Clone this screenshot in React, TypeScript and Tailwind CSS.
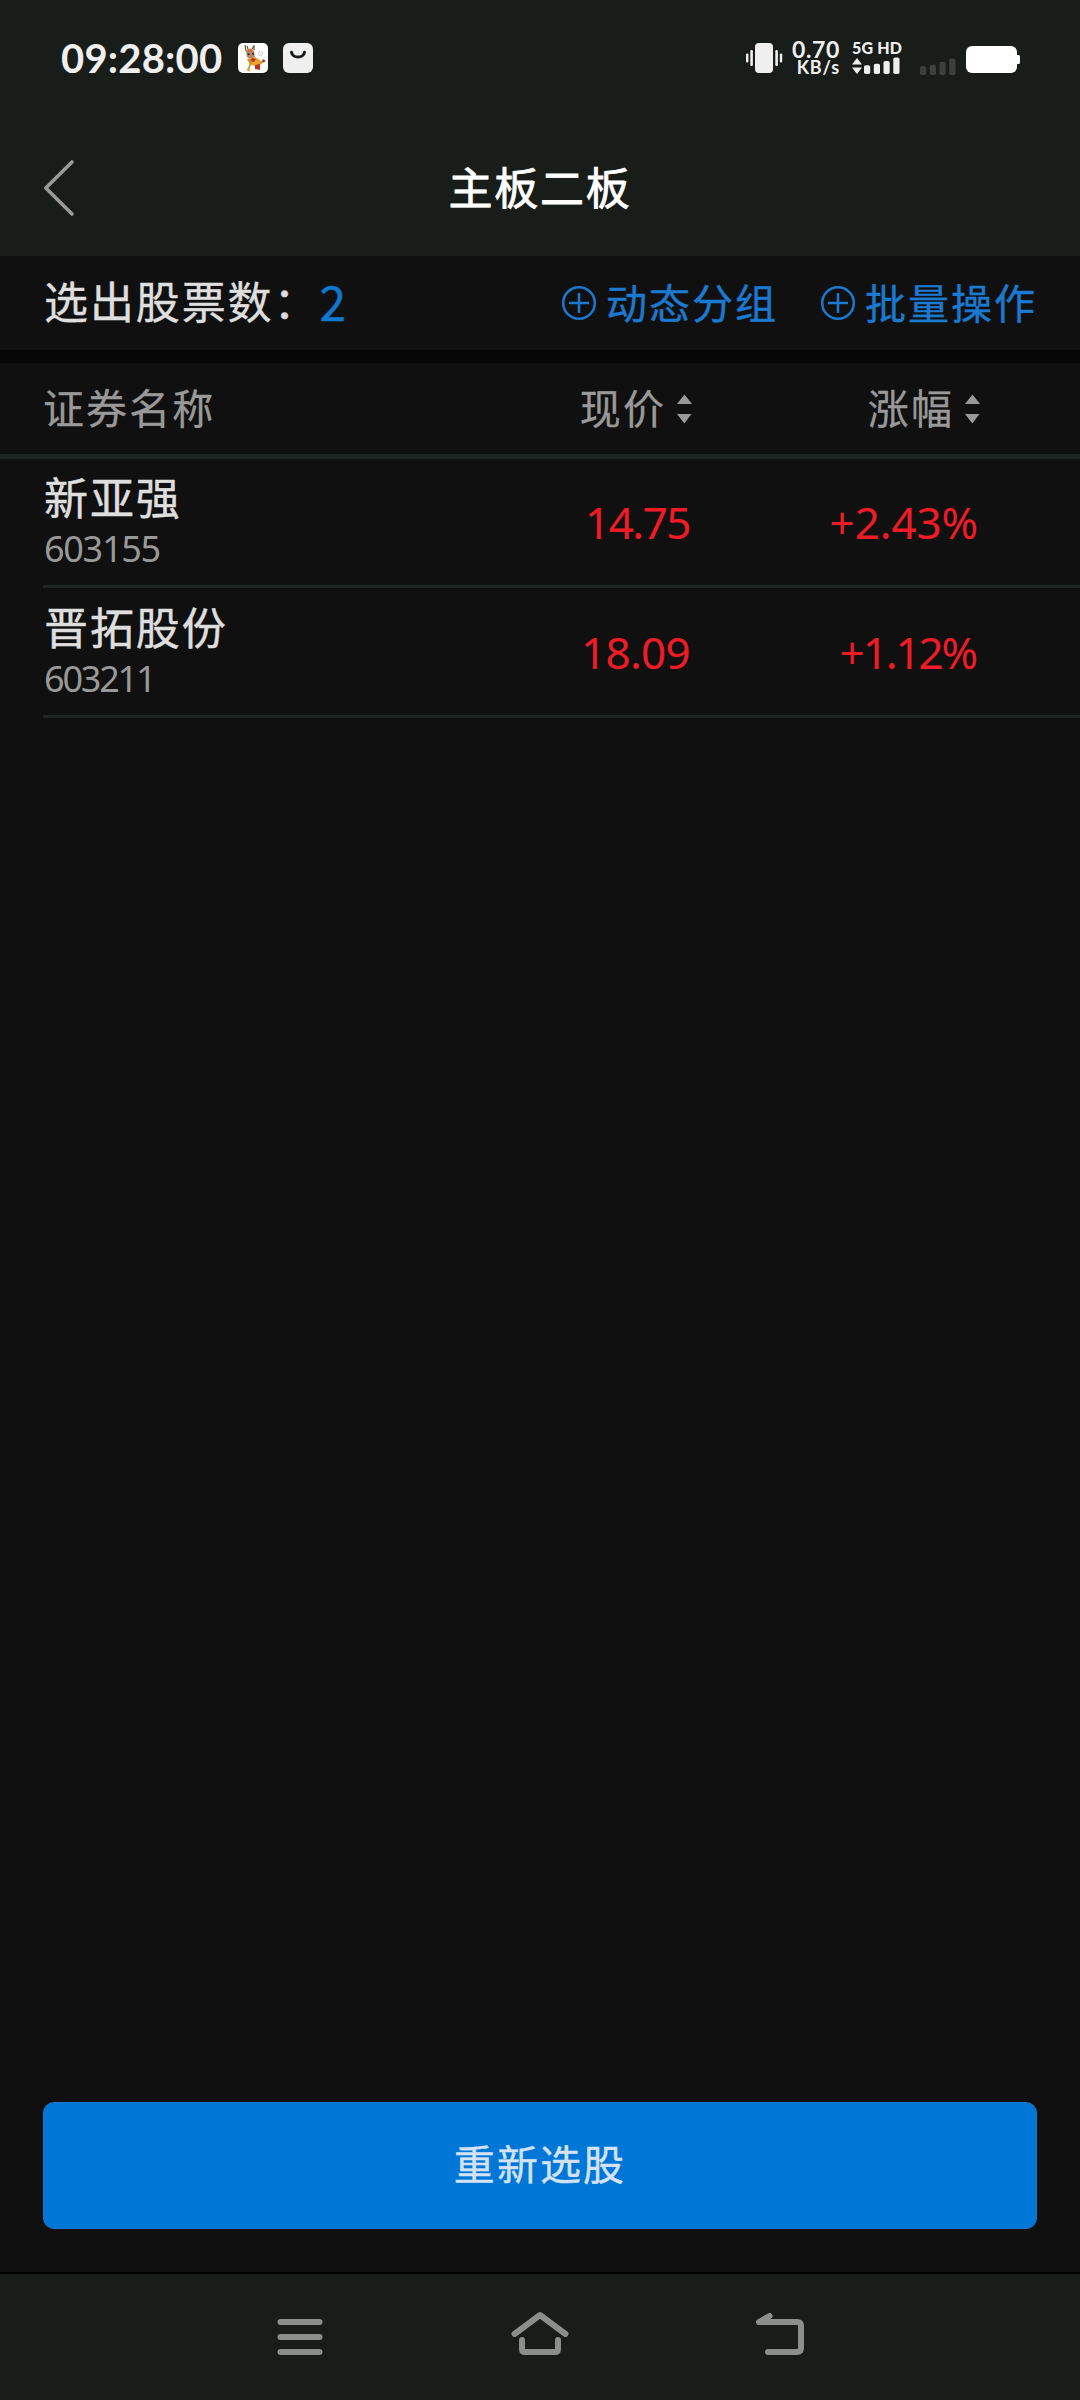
import React from 'react';

const stocks = [
  { name: '新亚强', code: '603155', price: '14.75', change: '+2.43%', codeCls: 'tracking-[-1.3px]', priceCls: 'tracking-[-1.5px] pr-[2px]', changeCls: 'tracking-[-0.1px] pr-[2px]' },
  { name: '晋拓股份', code: '603211', price: '18.09', change: '+1.12%', codeCls: 'tracking-[-2.2px]', priceCls: 'tracking-[-0.7px] pr-[2px]', changeCls: 'tracking-[-2.1px] pr-[4px]' },
];

const SignalBars = ({ className }: { className: string }) => (
  <svg width="36" height="17" viewBox="0 0 36 17" className={className} fill="currentColor">
    <rect x="0" y="8.3" width="6.2" height="8.7" rx="1.8" />
    <rect x="9.8" y="6.7" width="6.2" height="10.3" rx="1.8" />
    <rect x="19.5" y="4" width="6.2" height="13" rx="1.8" />
    <rect x="29.3" y="0.5" width="6.2" height="16.5" rx="1.8" />
  </svg>
);

const PlusCircle = () => (
  <svg width="36" height="36" viewBox="0 0 36 36" fill="none" stroke="currentColor" strokeWidth="2.5" className="shrink-0">
    <circle cx="18" cy="18" r="15.8" />
    <path d="M18 8v20M8 18h20" />
  </svg>
);

const SortIcon = () => (
  <svg width="15" height="30" viewBox="0 0 15 30" fill="#999" className="shrink-0">
    <path d="M7.5 0.5 15 10H0zM0 20h14.5L7.3 29.5z" />
  </svg>
);

const StatusBar = () => (
  <div className="flex h-[116px] items-center pl-[61px] pr-[60px] text-[#efefef]">
    <span className="w-[177px] whitespace-nowrap font-['Lato'] text-[40px] font-bold leading-[40px] tracking-[0.2px]">09:28:00</span>
    <svg width="30" height="30" viewBox="0 0 30 30">
      <rect width="30" height="30" rx="5" fill="#fff" />
      <path d="M8 8q4-5 8 0l1 6-4 3-4-3z" fill="#b08a70" />
      <path d="M8 8L7 2M10 6L9 3M16 7l0-5M14 6l2-3" stroke="#67533f" strokeWidth="1.2" fill="none" />
      <path d="M9.5 6h5l-1 3h-3z" fill="#d5722c" />
      <circle cx="10.5" cy="11.2" r="1" fill="#2a1c16" />
      <circle cx="15" cy="10.8" r="1" fill="#2a1c16" />
      <path d="M9 16l8-2 5 3 2 4-5 2-7-1z" fill="#eca32d" />
      <path d="M14 15l4 1-2 3-4-1zM17 22l5-1v6l-5-1z" fill="#b73520" />
      <path d="M10 17l3 1-1 4-2 5M26 18l-4 2" stroke="#c98522" strokeWidth="1.5" fill="none" />
      <circle cx="22.5" cy="10.5" r="2" fill="#fff" stroke="#bbb" strokeWidth=".8" />
      <path d="M25 16l2.500 1.500-1.500 2-2-1z" fill="#a83226" />
      <path d="M9 26.500l3 1" stroke="#dca72c" strokeWidth="2" />
    </svg>
    <svg width="30" height="30" viewBox="0 0 30 30" className="ml-[15px]">
      <rect width="30" height="30" rx="6" fill="#efefef" />
      <path d="M8.5 9.2c1 6.500 12 6.500 13 0" fill="none" stroke="#181d19" strokeWidth="3" strokeLinecap="round" />
    </svg>
    <div className="ml-auto flex items-center">
      <svg width="37" height="30" viewBox="0 0 37 30" fill="currentColor">
        <rect x="9" width="18" height="30" rx="4" />
        <rect x="0" y="10.5" width="2.4" height="9" rx="1" />
        <rect x="4.3" y="7" width="2.6" height="16" rx="1" />
        <rect x="29.3" y="7" width="2.6" height="16" rx="1" />
        <rect x="33.8" y="10.5" width="2.4" height="9" rx="1" />
      </svg>
      <div className="ml-[8px] flex w-[50px] flex-col items-end whitespace-nowrap pr-[1px] font-['Lato'] font-bold">
        <span className="h-[18px] text-[23px] leading-[18px] tracking-[0.6px]">0.70</span>
        <span className="h-[18px] text-[18px] leading-[19px] tracking-[0.9px]">KB/s</span>
      </div>
      <div className="ml-[11px] flex w-[50px] flex-col">
        <span className="-mt-[3px] h-[17px] whitespace-nowrap font-['Lato'] text-[16px] font-black leading-[15px] tracking-[0.2px]">5G HD</span>
        <div className="flex items-end">
          <svg width="10" height="16" viewBox="0 0 10 16" fill="currentColor" className="mr-[2px]">
            <path d="M5 0l5 6.5H0zM0 9.5h10L5 16z" />
          </svg>
          <SignalBars className="shrink-0" />
        </div>
      </div>
      <SignalBars className="ml-[18px] mt-[16px] text-[#3b403c]" />
      <svg width="54" height="27" viewBox="0 0 54 27" fill="#fff" className="ml-[10px] mt-[2px]">
        <rect width="51" height="27" rx="6" />
        <rect x="49" y="9" width="5" height="9" rx="1.5" />
      </svg>
    </div>
  </div>
);

const TitleBar = () => (
  <div className="grid h-[140px] grid-cols-[1fr_auto_1fr] items-center pt-[4px]">
    <svg width="32" height="60" viewBox="0 0 32 60" className="ml-[43px]" fill="none" stroke="#999" strokeWidth="3.6" strokeLinecap="round" strokeLinejoin="round">
      <path d="M29 4 2.8 30 29 56" />
    </svg>
    <h1 className="pb-[5px] text-[44px] font-normal leading-[60px] tracking-[1.8px] text-white [-webkit-text-stroke:0.8px]">主板二板</h1>
  </div>
);

const SummaryBar = () => (
  <div className="flex h-[94px] items-center pl-[44px] pr-[43px] [-webkit-text-stroke:0.4px]">
    <span className="pb-[6px] text-[44px] leading-[60px] tracking-[1.9px] text-[#dedede]">选出股票数：</span>
    <span className="pb-[6px] text-[48px] leading-[60px] text-[#1177cf]">2</span>
    <div className="ml-auto flex items-center gap-[42px] text-[41px] leading-[60px] tracking-[2px] text-[#1b79cf]">
      <button className="flex items-center gap-[9px]"><PlusCircle /><span className="pb-[5px]">动态分组</span></button>
      <button className="flex items-center gap-[9px]"><PlusCircle /><span className="pb-[5px]">批量操作</span></button>
    </div>
  </div>
);

const TableHead = () => (
  <div className="flex h-[96px] items-center border-b-[5px] border-[#202422] pl-[43px] text-[41px] leading-[60px] tracking-[2.1px] text-[#999] [-webkit-text-stroke:0.3px]">
    <span className="w-[349px] pb-[6px]">证券名称</span>
    <div className="flex w-[300px] items-center justify-end gap-[11px]"><span className="pb-[6px]">现价</span><SortIcon /></div>
    <div className="flex w-[288px] items-center justify-end gap-[11px]"><span className="pb-[6px]">涨幅</span><SortIcon /></div>
  </div>
);

export default function App() {
  return (
    <main className="flex h-[2400px] w-[1080px] flex-col overflow-hidden bg-[#101010] font-['Noto_Sans_CJK_SC',sans-serif]">
      <header className="bg-[#181d19]">
        <StatusBar />
        <TitleBar />
      </header>
      <SummaryBar />
      <div className="h-[13px] bg-[#070707]" />
      <TableHead />
      {stocks.map((s, i) => (
        <div key={s.code} className={`ml-[43px] flex items-center border-b-[3px] border-[#202422] ${i === 0 ? 'h-[129px]' : 'h-[130px]'}`}>
          <div className="flex w-[400px] flex-col pl-[1px] pt-[2px]">
            <span className="h-[52px] text-[44px] leading-[48px] tracking-[1.9px] text-[#dedede] [-webkit-text-stroke:0.5px]">{s.name}</span>
            <span className={`h-[50px] font-['Noto_Sans'] text-[36px] leading-[50px] text-[#999] ${s.codeCls}`}>{s.code}</span>
          </div>
          <span className={`w-[249px] text-right font-['Noto_Sans'] text-[44px] leading-[58px] text-[#ef1c27] ${s.priceCls}`}>{s.price}</span>
          <span className={`w-[288px] text-right font-['Noto_Sans'] text-[44px] leading-[58px] text-[#ef1c27] ${s.changeCls}`}>{s.change}</span>
        </div>
      ))}
      <button className="mx-[43px] mb-[43px] mt-auto h-[127px] shrink-0 rounded-[11px] border border-[#1b76cc] bg-[#0077d7] pb-[7px] text-[41px] leading-[60px] tracking-[2.1px] text-[#d5e2f5] [-webkit-text-stroke:0.4px]">
        重新选股
      </button>
      <nav className="h-[128px] shrink-0 border-t-2 border-black bg-[#181d19]">
        <div className="mx-auto grid h-[126px] w-[720px] grid-cols-3 place-items-center">
          <svg width="60" height="60" viewBox="-30 -30 60 60" fill="none" stroke="#8c8e8b" strokeWidth="6" strokeLinecap="round">
            <path d="M-19.5 -15h39M-19.5 0h39M-19.5 15h39" />
          </svg>
          <svg width="60" height="60" viewBox="-30 -30 60 60" fill="none" stroke="#8c8e8b" strokeWidth="6" strokeLinecap="round" strokeLinejoin="round">
            <path d="M-25.5 -3 0 -22 25.5 -3M-18 3v9q0 3 3 3h30q3 0 3 -3v-9" />
          </svg>
          <svg width="60" height="60" viewBox="-30 -30 60 60" fill="none" stroke="#8c8e8b" strokeWidth="6" strokeLinecap="round" strokeLinejoin="round">
            <path d="M-10.5 -21 -21 -15h38q4 0 4 4v22q0 4 -4 4h-29" />
          </svg>
        </div>
      </nav>
    </main>
  );
}
